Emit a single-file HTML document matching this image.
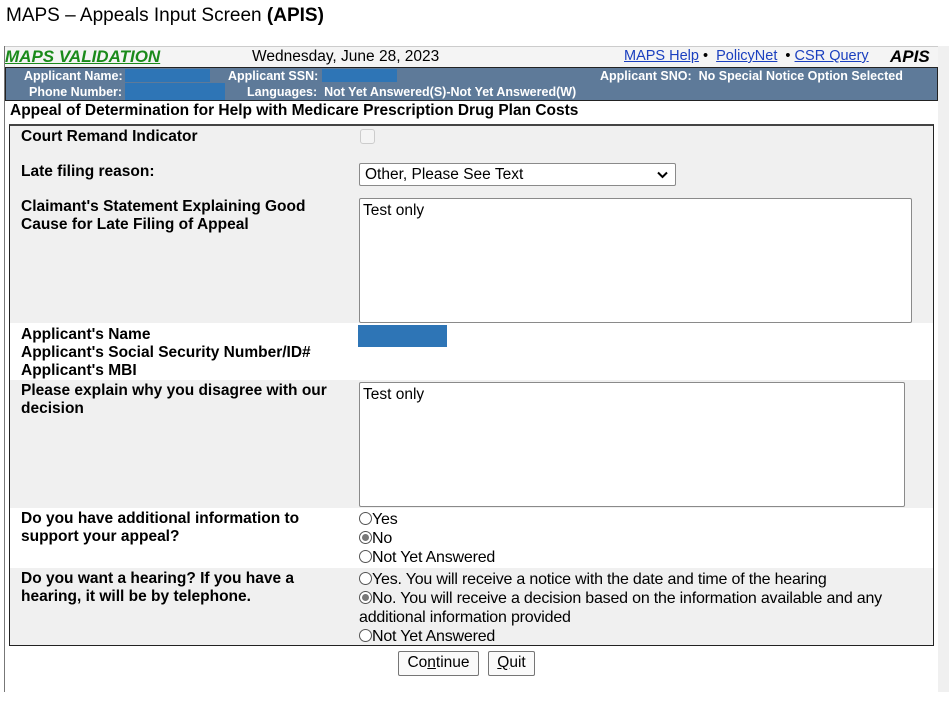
<!DOCTYPE html>
<html><head><style>
*{margin:0;padding:0;box-sizing:border-box}
body{width:949px;height:712px;background:#fff;font-family:"Liberation Sans",Arial,sans-serif;position:relative;overflow:hidden;color:#000}
.a{position:absolute;white-space:nowrap}
.lbl{font-weight:bold;font-size:15.5px;line-height:18px}
.w{color:#fff;font-weight:bold;font-size:12.5px}
.radio{display:inline-block;width:13px;height:13px;border:1px solid #555;border-radius:50%;vertical-align:-1px;background:#fff;position:relative}
.radio.on::after{content:"";position:absolute;left:2px;top:2px;width:7px;height:7px;border-radius:50%;background:#777}
.r{font-size:16px;line-height:19px;letter-spacing:-0.2px}
.box{position:absolute;background:#fff;border:1px solid #8a8a8a;border-radius:2px}
.btn{position:absolute;background:#fafafa;border:1px solid #767676;border-radius:2px;font-size:15.5px;text-align:center;line-height:22px}
</style></head><body>
<div class="a" style="left:6px;top:5px;font-size:19px">MAPS – Appeals Input Screen <b>(APIS)</b></div>

<div class="a" style="left:4px;top:46px;width:1px;height:646px;background:#777"></div>
<div class="a" style="left:938px;top:46px;width:11px;height:646px;background:#f0f0f0"></div>
<div class="a" style="left:5px;top:46px;width:933px;height:21px;background:#f4f4f4;border-top:1px solid #ccc"></div>
<div class="a" style="left:5px;top:47px;font-size:17px;font-weight:bold;font-style:italic;color:#1a8a1a;text-decoration:underline">MAPS VALIDATION</div>
<div class="a" style="left:252px;top:48px;font-size:15.5px">Wednesday, June 28, 2023</div>
<div class="a" style="left:624px;top:48px;font-size:14.5px"><span style="color:#1a3fbf;text-decoration:underline">MAPS Help</span> • &nbsp;<span style="color:#1a3fbf;text-decoration:underline">PolicyNet</span> &nbsp;• <span style="color:#1a3fbf;text-decoration:underline">CSR Query</span></div>
<div class="a" style="left:890px;top:47px;font-size:17px;font-weight:bold;font-style:italic">APIS</div>

<div class="a" style="left:5px;top:67px;width:933px;height:34px;background:#5e7a99;border:1px solid #222"></div>
<div class="a w" style="left:24px;top:69px">Applicant Name:</div>
<div class="a" style="left:125px;top:69px;width:85px;height:13px;background:#2e75b6"></div>
<div class="a w" style="left:228px;top:69px">Applicant SSN:</div>
<div class="a" style="left:322px;top:69px;width:75px;height:13px;background:#2e75b6"></div>
<div class="a w" style="left:600px;top:69px">Applicant SNO:&nbsp; No Special Notice Option Selected</div>
<div class="a w" style="left:29px;top:85px">Phone Number:</div>
<div class="a" style="left:125px;top:83px;width:100px;height:17px;background:#2e75b6"></div>
<div class="a w" style="left:247px;top:85px">Languages:&nbsp; Not Yet Answered(S)-Not Yet Answered(W)</div>

<div class="a" style="left:10px;top:102px;font-size:15.5px;font-weight:bold">Appeal of Determination for Help with Medicare Prescription Drug Plan Costs</div>

<div class="a" style="left:9px;top:124px;width:925px;height:522px;border:1px solid #222;border-top:2px solid #444;background:#f0f0f0"></div>
<div class="a" style="left:10px;top:323px;width:923px;height:57px;background:#fff"></div>
<div class="a" style="left:10px;top:508px;width:923px;height:60px;background:#fff"></div>

<div class="a lbl" style="left:21px;top:128px">Court Remand Indicator</div>
<div class="a" style="left:360px;top:129px;width:15px;height:15px;border:1px solid #ccc;border-radius:3px;background:#f4f4f4"></div>

<div class="a lbl" style="left:21px;top:163px">Late filing reason:</div>
<div class="box" style="left:359px;top:163px;width:317px;height:23px;font-size:15.5px;padding:2px 5px">Other, Please See Text<svg style="position:absolute;right:7px;top:7px" width="11" height="8" viewBox="0 0 11 8"><path d="M1 1.5 L5.5 6 L10 1.5" fill="none" stroke="#000" stroke-width="2"/></svg></div>

<div class="a lbl" style="left:21px;top:198px">Claimant's Statement Explaining Good<br>Cause for Late Filing of Appeal</div>
<div class="box" style="left:359px;top:198px;width:553px;height:125px;font-size:15.5px;padding:3px 3px">Test only</div>

<div class="a lbl" style="left:21px;top:326px">Applicant's Name<br>Applicant's Social Security Number/ID#<br>Applicant's MBI</div>
<div class="a" style="left:358px;top:325px;width:89px;height:22px;background:#2e75b6"></div>

<div class="a lbl" style="left:21px;top:382px">Please explain why you disagree with our<br>decision</div>
<div class="box" style="left:359px;top:382px;width:546px;height:125px;font-size:15.5px;padding:3px 3px">Test only</div>

<div class="a lbl" style="left:21px;top:510px">Do you have additional information to<br>support your appeal?</div>
<div class="a r" style="left:359px;top:510px"><span class="radio"></span>Yes<br><span class="radio on"></span>No<br><span class="radio"></span>Not Yet Answered</div>

<div class="a lbl" style="left:21px;top:570px">Do you want a hearing? If you have a<br>hearing, it will be by telephone.</div>
<div class="a r" style="left:359px;top:570px"><span class="radio"></span>Yes. You will receive a notice with the date and time of the hearing<br><span class="radio on"></span>No. You will receive a decision based on the information available and any<br>additional information provided<br><span class="radio"></span>Not Yet Answered</div>

<div class="btn" style="left:398px;top:651px;width:81px;height:25px">Co<u>n</u>tinue</div>
<div class="btn" style="left:488px;top:651px;width:47px;height:25px"><u>Q</u>uit</div>
</body></html>
